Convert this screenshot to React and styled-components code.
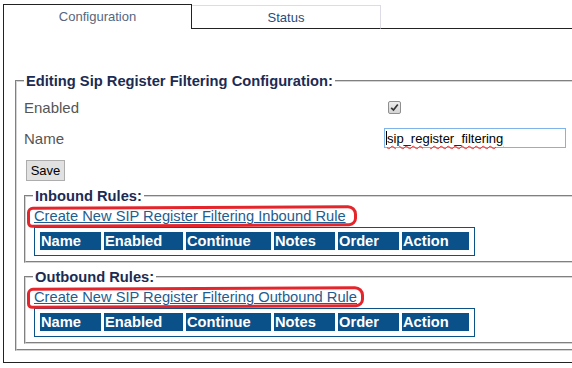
import React from 'react';
import styled, { createGlobalStyle } from 'styled-components';

const GlobalStyle = createGlobalStyle`
  body {
    margin: 0;
    overflow: hidden;
    background: #fff;
    font-family: "Liberation Sans", Arial, sans-serif;
  }
`;

const Page = styled.div`
  width: 640px;
  padding: 4px 0 0 3px;
`;

const TabBar = styled.div`
  display: flex;
  align-items: flex-end;
  height: 25px;
`;

const Tab = styled.div`
  box-sizing: border-box;
  display: flex;
  align-items: center;
  justify-content: center;
  width: 189px;
  height: ${p => (p.active ? '25px' : '24px')};
  font-size: 13px;
  background: #fff;
  color: ${p => (p.active ? '#56667e' : '#1f4d7c')};
  border: 1px solid ${p => (p.active ? '#222' : '#dcdce6')};
  border-bottom: ${p => (p.active ? 'none' : '1px solid #222')};
  border-left: ${p => (p.active ? '1px solid #222' : 'none')};
  padding-bottom: ${p => (p.active ? '1px' : '0')};
`;

const TabFiller = styled.div`
  flex: 1;
  height: 24px;
  box-sizing: border-box;
  border-bottom: 1px solid #222;
`;

const Panel = styled.div`
  border: 1px solid #222;
  border-top: none;
  padding: 43px 0 11px 11px;
`;

const Fieldset = styled.fieldset`
  margin: ${p => p.$margin || '0'};
  min-inline-size: 0;
  border: 2px groove #d4d4d4;
  padding: ${p => p.$padding};
`;

const Legend = styled.legend`
  padding: 0 2px;
  font-size: 14.7px;
  line-height: 18px;
  font-weight: bold;
  color: #1c2b52;
`;

const FieldRow = styled.div`
  display: grid;
  grid-template-columns: 360px 1fr;
  align-items: center;
  height: 22px;
  margin-top: ${p => p.$gap || '0'};
`;

const FieldLabel = styled.span`
  font-size: 15px;
  color: #555;
`;

const CheckBox = styled.span`
  box-sizing: border-box;
  display: inline-flex;
  align-items: center;
  justify-content: center;
  width: 13px;
  height: 13px;
  margin-left: 4px;
  border: 1px solid #8f8f8f;
  border-radius: 2px;
  background: linear-gradient(#ececec, #d4d4d4);
`;

const InputBox = styled.div`
  box-sizing: border-box;
  display: flex;
  align-items: center;
  width: 182px;
  height: 20px;
  padding: 0 1px;
  border: 1px solid #7eb4ea;
  background: #fff;
  font-size: 13px;
  color: #000;
`;

const Caret = styled.span`
  width: 1px;
  height: 14px;
  background: #000;
`;

const InputText = styled.span`
  text-decoration: underline wavy #e03030;
  text-decoration-thickness: 1px;
  text-underline-offset: 2px;
`;

const SaveButton = styled.button`
  display: block;
  box-sizing: border-box;
  width: 39px;
  height: 21px;
  margin: 11px 0 0 2px;
  padding: 0;
  border: 1px solid #adadad;
  background: #e1e1e1;
  font-family: "Liberation Sans", Arial, sans-serif;
  font-size: 13px;
  color: #000;
`;

const RuleLink = styled.a`
  position: relative;
  display: inline-block;
  margin-left: 1px;
  font-size: 14.7px;
  line-height: 18px;
  color: #1f5c8f;
  text-decoration: underline;

  &::after {
    content: '';
    position: absolute;
    left: -7px;
    right: ${p => p.$ringRight || '-10px'};
    top: -1px;
    bottom: -2px;
    border: 3px solid #e4262c;
    border-radius: 6px 9px 8px 5px;
    transform: rotate(-0.3deg);
  }
`;

const RuleTable = styled.table`
  margin: 2px 0 0 1px;
  border: 1px solid #0b5287;
  border-collapse: separate;
  border-spacing: 3px;
  padding: 1px 2px 2px;
`;

const HeadCell = styled.th`
  box-sizing: border-box;
  width: ${p => p.$w}px;
  height: 18px;
  padding: 0 1px;
  background: #0a5089;
  color: #fff;
  font-size: 14.7px;
  line-height: 18px;
  font-weight: bold;
  text-align: left;
`;

const columns = [
  ['Name', 61],
  ['Enabled', 79],
  ['Continue', 85],
  ['Notes', 61],
  ['Order', 61],
  ['Action', 67],
];

const RulesBlock = ({ title, link, ringRight, margin }) => (
  <Fieldset $margin={margin} $padding="2px 0 5px 7px">
    <Legend>{title}</Legend>
    <RuleLink href="#" $ringRight={ringRight}>{link}</RuleLink>
    <RuleTable>
      <thead>
        <tr>
          {columns.map(([name, w]) => (
            <HeadCell key={name} $w={w}>{name}</HeadCell>
          ))}
        </tr>
      </thead>
    </RuleTable>
  </Fieldset>
);

const App = () => (
  <Page>
    <GlobalStyle />
    <TabBar>
      <Tab active>Configuration</Tab>
      <Tab>Status</Tab>
      <TabFiller />
    </TabBar>
    <Panel>
      <Fieldset $padding="6px 0 5px 7px">
        <Legend>Editing Sip Register Filtering Configuration:</Legend>
        <FieldRow>
          <FieldLabel>Enabled</FieldLabel>
          <div>
            <CheckBox>
              <svg width="9" height="9" viewBox="0 0 9 9">
                <path d="M1.2 4.8 L3.5 7 L7.8 1.5" fill="none" stroke="#333" strokeWidth="1.7" />
              </svg>
            </CheckBox>
          </div>
        </FieldRow>
        <FieldRow $gap="9px">
          <FieldLabel>Name</FieldLabel>
          <div>
            <InputBox>
              <Caret />
              <InputText>sip_register_filtering</InputText>
            </InputBox>
          </div>
        </FieldRow>
        <SaveButton>Save</SaveButton>
        <RulesBlock
          title="Inbound Rules:"
          link="Create New SIP Register Filtering Inbound Rule"
          margin="6px 0 0 0"
          ringRight="-11px"
        />
        <RulesBlock
          title="Outbound Rules:"
          link="Create New SIP Register Filtering Outbound Rule"
          margin="5px 0 0 0"
          ringRight="-7px"
        />
      </Fieldset>
    </Panel>
  </Page>
);

export default App;
